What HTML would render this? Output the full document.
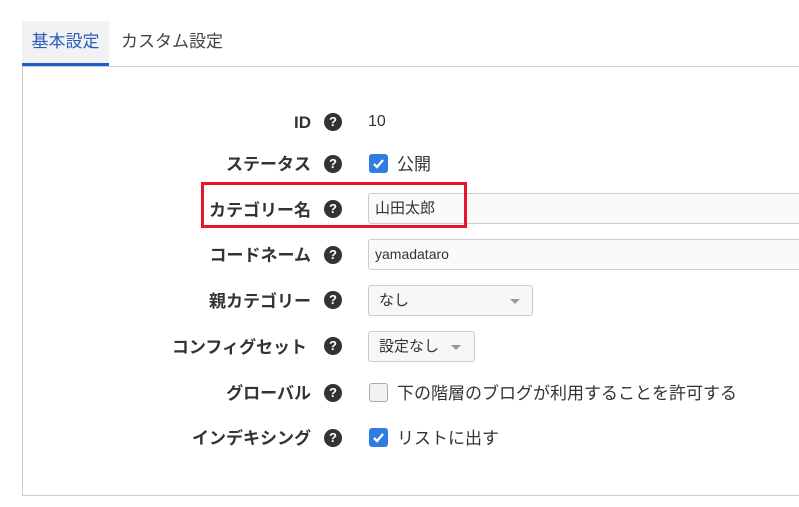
<!DOCTYPE html>
<html><head><meta charset="utf-8"><style>
*{box-sizing:border-box;margin:0;padding:0}
body{width:799px;height:507px;background:#fff;font-family:"Liberation Sans","Noto Sans CJK JP",sans-serif;color:#333;position:relative;overflow:hidden}
.tab{position:absolute;top:21px;height:45px;font-size:17px;line-height:42px}
.t1{left:22px;width:87px;background:#f2f2f5;color:#2a5cbc;text-align:center;border-bottom:3px solid #1a5fd0}
.t2{left:121px;color:#444}
.panel{position:absolute;left:22px;top:66px;width:800px;height:430px;border:1px solid #ccc}
.lab{position:absolute;right:488px;font-size:17px;line-height:20px;font-weight:bold;color:#333;white-space:nowrap;margin-top:2px}
.q{position:absolute;left:324px;width:18px;height:18px;border-radius:50%;background:#333;color:#fff;font-size:13px;font-weight:bold;text-align:center;line-height:18px}
.val{position:absolute;left:368px;font-size:17px;line-height:20px;margin-top:2px}
.inp{position:absolute;left:368px;width:440px;height:31px;border:1px solid #ccc;border-radius:3px;background:#fafafa;font-size:15px;line-height:29px;padding-left:6px}
.sel{position:absolute;left:368px;height:31px;border:1px solid #ccc;border-radius:3px;background:#f7f7f7;font-size:15px;line-height:29px;padding-left:10px}
.cb{position:absolute;left:369px;width:19px;height:19px;border-radius:3px}
.on{background:#2f7de1}
.off{background:#f2f2f2;border:1px solid #aaa}
.red{position:absolute;left:201px;top:182px;width:266px;height:46px;border:3px solid #e3162d}
</style></head><body>
<div class="tab t1">基本設定</div>
<div class="tab t2">カスタム設定</div>
<div class="panel"></div>

<div class="lab" style="top:111px">ID</div><div class="q" style="top:113px">?</div><div class="val" style="top:110px;font-size:16px">10</div>

<div class="lab" style="top:153px">ステータス</div><div class="q" style="top:155px">?</div>
<div class="cb on" style="top:154px"><svg width="19" height="19"><path d="M5 10l3 3 6-7" stroke="#fff" stroke-width="2.4" fill="none"/></svg></div>
<div class="val" style="top:153px;left:397px">公開</div>

<div class="lab" style="top:199px">カテゴリー名</div><div class="q" style="top:200px">?</div>
<div class="inp" style="top:193px">山田太郎</div>

<div class="lab" style="top:244px">コードネーム</div><div class="q" style="top:246px">?</div>
<div class="inp" style="top:239px;font-size:14px">yamadataro</div>

<div class="lab" style="top:290px">親カテゴリー</div><div class="q" style="top:291px">?</div>
<div class="sel" style="top:285px;width:165px">なし<span style="position:absolute;left:141px;top:13px;border:5px solid transparent;border-top-color:#999"></span></div>

<div class="lab" style="top:336px;right:492px">コンフィグセット</div><div class="q" style="top:337px">?</div>
<div class="sel" style="top:331px;width:107px">設定なし<span style="position:absolute;left:82px;top:13px;border:5px solid transparent;border-top-color:#999"></span></div>

<div class="lab" style="top:382px">グローバル</div><div class="q" style="top:384px">?</div>
<div class="cb off" style="top:383px"></div>
<div class="val" style="top:382px;left:397px">下の階層のブログが利用することを許可する</div>

<div class="lab" style="top:427px">インデキシング</div><div class="q" style="top:429px">?</div>
<div class="cb on" style="top:428px"><svg width="19" height="19"><path d="M5 10l3 3 6-7" stroke="#fff" stroke-width="2.4" fill="none"/></svg></div>
<div class="val" style="top:427px;left:397px">リストに出す</div>

<div class="red"></div>
</body></html>
